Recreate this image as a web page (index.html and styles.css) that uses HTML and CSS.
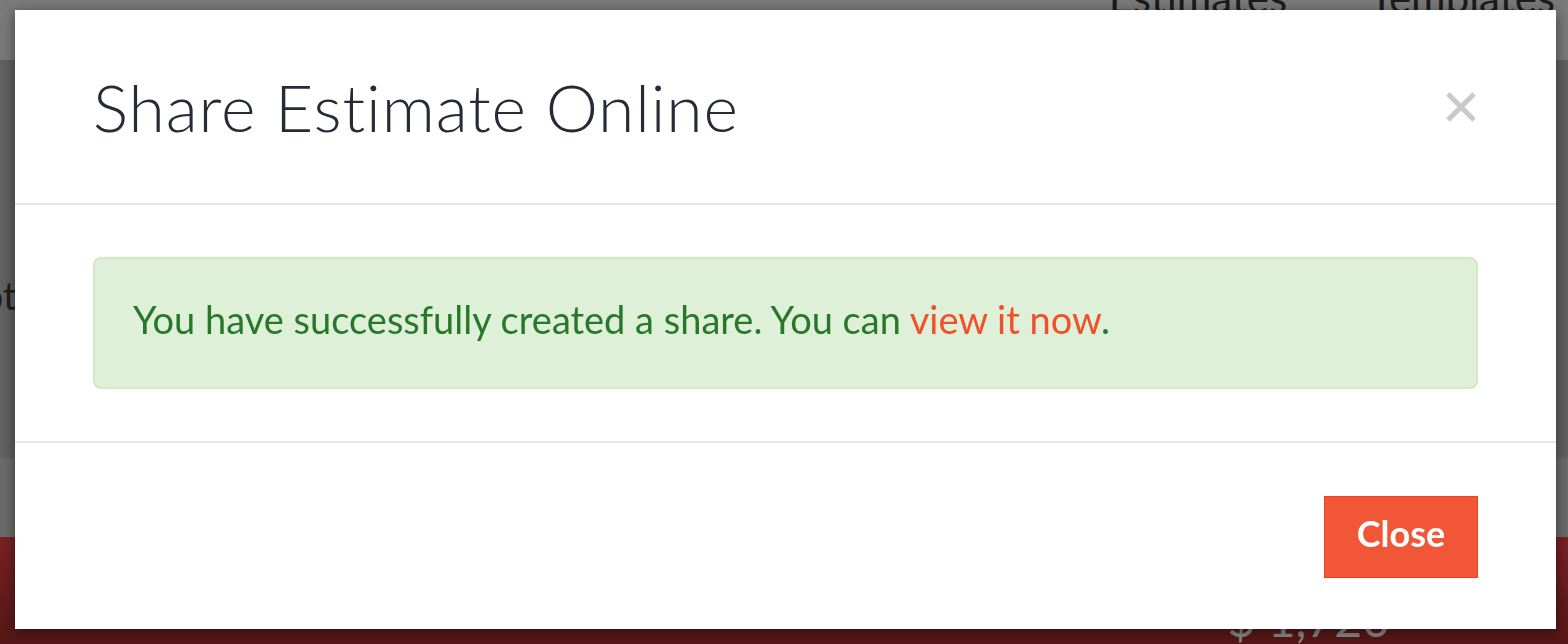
FILE: index.html
```html
<!DOCTYPE html>
<html>
<head>
    <meta charset="UTF-8">
    <title>Share Estimate Online</title>
    <link rel="stylesheet" href="styles.css">
</head>
<body>
    <!-- page behind the modal (already dimmed) -->
    <div class="page">
        <div class="topbar">
            <a class="nav-link">Estimates</a>
            <a class="nav-link">Templates</a>
        </div>
        <div class="main">
            <div class="row-label">Total</div>
        </div>
        <div class="sub"></div>
        <div class="footer">
            <span class="amount">$ 1,720</span>
        </div>
    </div>

    <!-- modal -->
    <div class="modal">
        <div class="modal-header">
            <h2 class="modal-title">Share Estimate Online</h2>
            <button class="close-x" aria-label="Close">
                <svg width="30" height="30" viewBox="0 0 30 30">
                    <path d="M2 2 L28 28 M28 2 L2 28" stroke="#c9c9c9" stroke-width="5"/>
                </svg>
            </button>
        </div>
        <div class="modal-body">
            <div class="alert-success">
                You have successfully created a share. You can <a class="alert-link">view it now</a>.
            </div>
        </div>
        <div class="modal-footer">
            <button class="btn-close">Close</button>
        </div>
    </div>
</body>
</html>
```

FILE: styles.css
```css
body {
    margin: 0;
    height: 644px;
    overflow: hidden;
    font-family: Lato, 'Open Sans', sans-serif;
    background-color: #616161;
}
.page {
    display: flex;
    flex-direction: column;
    height: 644px;
}
.page > div {
    flex-shrink: 0;
    overflow: hidden;
}
.topbar {
    height: 60px;
    background-color: #7a7a7a;
    display: flex;
    justify-content: flex-end;
    gap: 82px;
    padding-right: 13px;
}
.nav-link {
    font-size: 42px;
    line-height: 42px;
    margin-top: -24px;
    color: #1c1c1c;
}
.main {
    height: 398px;
    background-color: #616161;
    padding-top: 215px;
    box-sizing: border-box;
}
.row-label {
    font-size: 38px;
    line-height: 40px;
    color: #1e1e1e;
    margin-left: -36px;
}
.sub {
    height: 79px;
    background-color: #6b6b6b;
}
.footer {
    height: 107px;
    background: linear-gradient(#7a2124, #561717);
    display: flex;
    justify-content: flex-end;
    padding-right: 178px;
}
.amount {
    font-size: 48px;
    line-height: 48px;
    margin-top: 58px;
    color: #8c8c8c;
}
.modal {
    position: fixed;
    top: 10px;
    left: 15px;
    width: 1541px;
    background: white;
    box-shadow: 0 3px 12px rgba(0,0,0,0.5);
}
.modal-header {
    height: 193px;
    border-bottom: 2px solid #e5e5e5;
    padding: 0 78px;
    display: flex;
    align-items: center;
    justify-content: space-between;
}
.modal-title {
    margin: 0;
    font-size: 66px;
    font-weight: 300;
    color: #272b36;
    letter-spacing: 0.9px;
}
.close-x {
    background: none;
    border: none;
    padding: 0;
    width: 30px;
    height: 30px;
    margin-right: 2px;
    cursor: pointer;
}
.close-x svg {
    display: block;
}
.modal-body {
    padding: 52px 78px;
    border-bottom: 2px solid #e5e5e5;
}
.alert-success {
    background-color: #dff0d8;
    border: 2px solid #d3e9c5;
    border-radius: 8px;
    padding: 36px 38px 44px;
    line-height: 48px;
    font-size: 38px;
    color: #28782a;
}
.alert-link {
    color: #f0502b;
}
.modal-footer {
    padding: 53px 78px 51px;
    display: flex;
    justify-content: flex-end;
}
.btn-close {
    width: 154px;
    height: 82px;
    padding: 0 0 8px;
    background-color: #f15636;
    border: 1px solid #f0401c;
    color: white;
    font-family: Lato, sans-serif;
    font-weight: 700;
    font-size: 36px;
    cursor: pointer;
}
```
